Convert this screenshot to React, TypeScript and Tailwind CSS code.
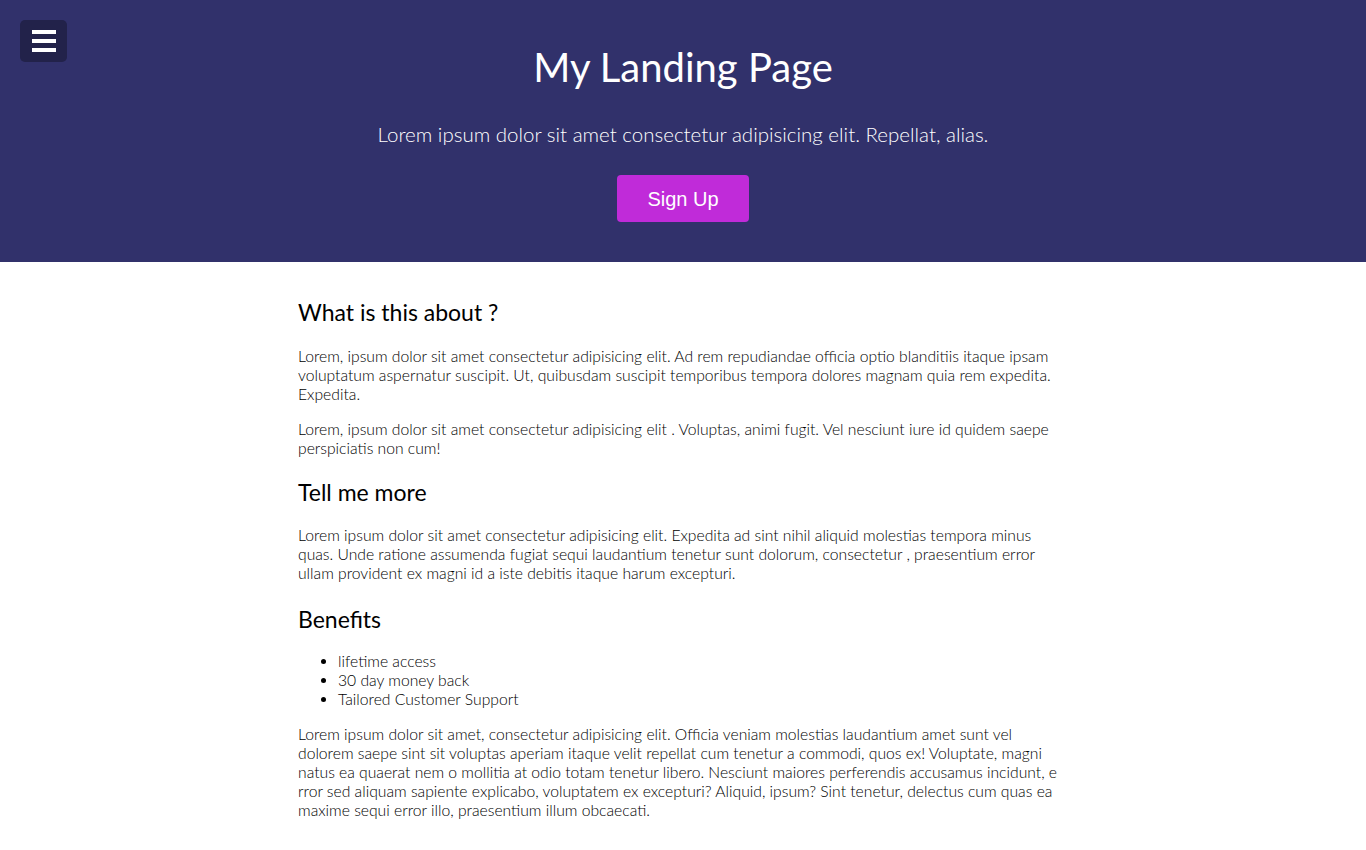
export default function App() {
  return (
    <div className="min-h-screen bg-white font-['Lato','Noto_Sans',sans-serif]">

      {/* HERO */}
      <header className="relative bg-[#31316b] text-white flex flex-col items-center pt-[43px] pb-[40px]">
        <button className="absolute top-[20px] left-[20px] w-[47px] h-[42px] rounded-[5px] bg-[#22224a] flex flex-col items-center justify-center gap-[5px]">
          <span className="block w-[24px] h-[4px] bg-white" />
          <span className="block w-[24px] h-[4px] bg-white" />
          <span className="block w-[24px] h-[4px] bg-white" />
        </button>

        <h1 className="text-[40px] leading-[48px] font-normal">My Landing Page</h1>

        <p className="mt-[31px] text-[20.5px] leading-[24px] font-light">
          Lorem ipsum dolor sit amet consectetur adipisicing elit. Repellat, alias.
        </p>

        <button className="mt-[29px] w-[132px] h-[47px] rounded-[4px] bg-[#c02bd9] text-white text-[20px] leading-[22px] font-['Liberation_Sans',Arial,sans-serif]">
          Sign Up
        </button>
      </header>

      {/* CONTENT */}
      <main className="max-w-[770px] mx-auto pt-[36px] pb-[20px] text-black text-[15.7px] leading-[19px] font-light">

        <h2 className="text-[23px] leading-[28px] font-normal text-black">What is this about ?</h2>
        <p className="mt-[21px]">
          Lorem, ipsum dolor sit amet consectetur adipisicing elit. Ad rem repudiandae officia optio blanditiis itaque ipsam voluptatum aspernatur suscipit. Ut, quibusdam suscipit temporibus tempora dolores magnam quia rem expedita. Expedita.
        </p>
        <p className="mt-[16px]">
          Lorem, ipsum dolor sit amet consectetur adipisicing elit . Voluptas, animi fugit. Vel nesciunt iure id quidem saepe perspiciatis non cum!
        </p>

        <h2 className="mt-[20px] text-[23px] leading-[28px] font-normal text-black">Tell me more</h2>
        <p className="mt-[20px]">
          Lorem ipsum dolor sit amet consectetur adipisicing elit. Expedita ad sint nihil aliquid molestias tempora minus quas. Unde ratione assumenda fugiat sequi laudantium tenetur sunt dolorum, consectetur , praesentium error ullam provident ex magni id a iste debitis itaque harum excepturi.
        </p>

        <h2 className="mt-[22px] text-[23px] leading-[28px] font-normal text-black">Benefits</h2>
        <ul className="mt-[19px] list-disc pl-[40px]">
          <li>lifetime access</li>
          <li>30 day money back</li>
          <li>Tailored Customer Support</li>
        </ul>
        <p className="mt-[16px]">
          Lorem ipsum dolor sit amet, consectetur adipisicing elit. Officia veniam molestias laudantium amet sunt vel dolorem saepe sint sit voluptas aperiam itaque velit repellat cum tenetur a commodi, quos ex! Voluptate, magni natus ea quaerat nem o mollitia at odio totam tenetur libero. Nesciunt maiores perferendis accusamus incidunt, e rror sed aliquam sapiente explicabo, voluptatem ex excepturi? Aliquid, ipsum? Sint tenetur, delectus cum quas ea maxime sequi error illo, praesentium illum obcaecati.
        </p>

      </main>
    </div>
  )
}
